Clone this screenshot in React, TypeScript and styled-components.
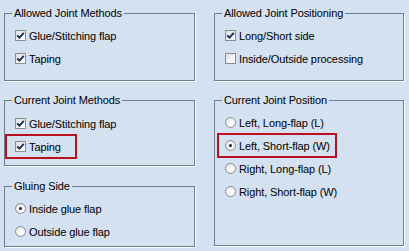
import React from "react";
import styled, { createGlobalStyle, css } from "styled-components";

const GlobalStyle = createGlobalStyle`
  html, body {
    margin: 0;
    padding: 0;
    background: #d4e1f0;
  }
  body {
    font-family: "Liberation Sans", Arial, sans-serif;
    font-size: 11px;
    letter-spacing: -0.1px;
    color: #000;
  }
`;

const Page = styled.div`
  width: 409px;
  height: 251px;
  box-sizing: border-box;
  padding: 7px 0 0 4px;
  display: grid;
  grid-template-columns: 191px 190px;
  column-gap: 19px;
  align-items: start;
`;

const Column = styled.div`
  display: flex;
  flex-direction: column;
`;

const Group = styled.fieldset<{ $top?: number; $padTop?: number; $padBottom: number }>`
  margin: ${(p) => p.$top ?? 0}px 0 0 0;
  padding: ${(p) => p.$padTop ?? 4}px 0 ${(p) => p.$padBottom}px 10px;
  border: 1px solid #6f7d90;
  box-shadow: 1px 1px 0 #ffffff;
  min-width: 0;
`;

const Legend = styled.legend`
  padding: 0 2px;
  margin-left: -3px;
  line-height: 13px;
  font-size: 11px;
`;

const OptionRow = styled.label<{ $hlWidth?: number; $inset?: number }>`
  display: flex;
  align-items: center;
  gap: 3px;
  height: 23px;
  width: fit-content;
  box-sizing: border-box;
  white-space: nowrap;
  ${(p) =>
    p.$hlWidth &&
    css`
      width: ${p.$hlWidth}px;
      margin-left: -${p.$inset}px;
      padding-left: ${p.$inset}px;
      outline: 2px solid #b8101c;
      outline-offset: -1px;
    `}
`;

const CheckBox = styled.span`
  width: 11px;
  height: 11px;
  box-sizing: border-box;
  border: 1px solid #8a8c8f;
  background: linear-gradient(135deg, #dfe1e4 0%, #ffffff 100%);
  display: inline-flex;
  align-items: center;
  justify-content: center;
  flex: none;
`;

const RadioDot = styled.span<{ $checked: boolean }>`
  width: 11px;
  height: 11px;
  border-radius: 50%;
  box-sizing: border-box;
  border: 1px solid #8a8c8f;
  background: radial-gradient(circle at 65% 65%, #ffffff 0%, #e2e4e7 100%);
  display: inline-flex;
  align-items: center;
  justify-content: center;
  flex: none;

  &::after {
    content: "";
    width: 3px;
    height: 3px;
    border-radius: 50%;
    background: #15203a;
    display: ${(p) => (p.$checked ? "block" : "none")};
  }
`;

type Option = { label: string; checked: boolean; hlWidth?: number; inset?: number };

function Check({ label, checked, hlWidth, inset }: Option) {
  return (
    <OptionRow $hlWidth={hlWidth} $inset={inset}>
      <CheckBox>
        {checked && (
          <svg width="9" height="9" viewBox="0 0 9 9">
            <path d="M1.2 4.4 L3.4 6.6 L7.8 1.8" fill="none" stroke="#1b2c55" strokeWidth="1.9" />
          </svg>
        )}
      </CheckBox>
      {label}
    </OptionRow>
  );
}

function Radio({ label, checked, hlWidth, inset }: Option) {
  return (
    <OptionRow $hlWidth={hlWidth} $inset={inset}>
      <RadioDot $checked={checked} />
      {label}
    </OptionRow>
  );
}

export default function App() {
  return (
    <>
      <GlobalStyle />
      <Page>
        <Column>
          <Group $padBottom={10}>
            <Legend>Allowed Joint Methods</Legend>
            <Check label="Glue/Stitching flap" checked />
            <Check label="Taping" checked />
          </Group>
          <Group $top={13} $padTop={5} $padBottom={7}>
            <Legend>Current Joint Methods</Legend>
            <Check label="Glue/Stitching flap" checked />
            <Check label="Taping" checked hlWidth={70} inset={9} />
          </Group>
          <Group $top={14} $padBottom={3}>
            <Legend>Gluing Side</Legend>
            <Radio label="Inside glue flap" checked />
            <Radio label="Outside glue flap" checked={false} />
          </Group>
        </Column>
        <Column>
          <Group $padBottom={10}>
            <Legend>Allowed Joint Positioning</Legend>
            <Check label="Long/Short side" checked />
            <Check label="Inside/Outside processing" checked={false} />
          </Group>
          <Group $top={13} $padBottom={42}>
            <Legend>Current Joint Position</Legend>
            <Radio label="Left, Long-flap (L)" checked={false} />
            <Radio label="Left, Short-flap (W)" checked hlWidth={118} inset={7} />
            <Radio label="Right, Long-flap (L)" checked={false} />
            <Radio label="Right, Short-flap (W)" checked={false} />
          </Group>
        </Column>
      </Page>
    </>
  );
}
